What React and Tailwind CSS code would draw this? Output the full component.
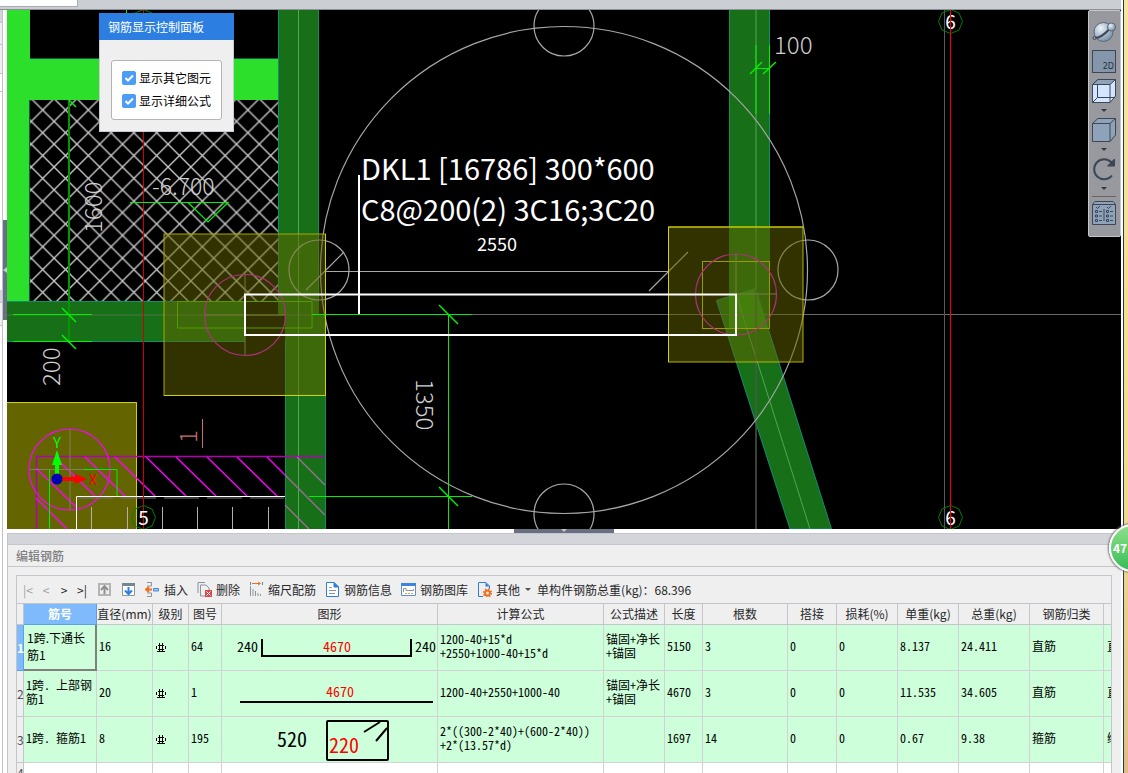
import { useState } from 'react';

const UI_FONT = 'font-["Noto_Sans_CJK_SC",sans-serif]';
const MONO_FONT = 'font-["Noto_Sans_Mono_CJK_SC","DejaVu_Sans_Mono","Noto_Sans_CJK_SC",monospace]';

/* ---------- model view ---------- */

/** Axis number inside a green octagon */
function AxisMark({ x, y, label }) {
  const points = '12,0 8.5,8.5 0,12 -8.5,8.5 -12,0 -8.5,-8.5 0,-12 8.5,-8.5';
  return (
    <g transform={`translate(${x} ${y})`}>
      <polygon points={points} fill="none" stroke="#008000" />
      {label && (
        <text y="7" textAnchor="middle" fontSize="19" fill="#fff">{label}</text>
      )}
    </g>
  );
}

/** Dimension text drawn with the thin CAD face */
function DimText({ x, y, rotate = 0, size = 24, color = '#d0d0d0', children }) {
  return (
    <text
      transform={`translate(${x} ${y}) rotate(${rotate})`}
      fontSize={size}
      fill={color}
      className='font-["Liberation_Sans_Narrow","Noto_Sans_CJK_SC",sans-serif] font-light'
    >
      {children}
    </text>
  );
}

function ModelDrawing() {
  return (
    <svg
      viewBox="7 10 1114 519"
      preserveAspectRatio="xMinYMin slice"
      className='block h-full w-full font-["Noto_Sans_CJK_SC",sans-serif]'
      fill="none"
    >
      <defs>
        <pattern id="hatch" x="31.3" y="98.6" width="22.8" height="22.8" patternUnits="userSpaceOnUse">
          <path d="M-1 -1L23.8 23.8M23.8 -1L-1 23.8" stroke="#c8c8c8" strokeWidth="1.4" />
        </pattern>
      </defs>
      <rect x="7" y="10" width="1114" height="519" fill="#000" />

      {/* walls and slab opening */}
      <rect x="30" y="100" width="248" height="201" fill="url(#hatch)" />
      <rect x="7" y="10" width="23" height="291" fill="#2bdf2b" />
      <rect x="30" y="59" width="248" height="41" fill="#2bdf2b" />
      <path d="M30 58.5H278M29.5 100V301" stroke="#0b5a50" />

      {/* beams */}
      <rect x="7" y="301" width="238" height="41" fill="#176f17" />
      <rect x="278" y="10" width="41" height="305" fill="#176f17" />
      <rect x="285" y="315" width="41" height="214" fill="#176f17" />
      <rect x="729" y="10" width="41" height="318" fill="#176f17" />
      <polygon points="716.5,300.5 755.5,288.5 831.5,529 790,529" fill="#176f17" stroke="#0f8f78" />
      <polygon points="729,296.5 755.5,288.5 768,328 729,328" fill="#259a18" />
      <path d="M7 301.5H245M7 341.5H245M278.5 10V301M318.5 10V301M285.5 341V529M325.5 396V529M729.5 10V227M769.5 10V227" stroke="#0f8f6c" />
      <path d="M298.5 10V529M756 10V289M736 294L810 529" stroke="#55a555" />
      <path d="M7 315H312" stroke="#4c7a4c" />
      <path d="M472 314.5H1121" stroke="#6a6a6a" />
      <path d="M756 289V529" stroke="#4a5a4a" strokeWidth="1.5" />

      {/* lower left footing */}
      <rect x="7" y="402" width="130" height="127" fill="#646400" />
      <path d="M7 402.5H136.5V529" stroke="#d2d200" />
      <path d="M36.5 529V456.5H325" stroke="#b400b4" strokeWidth="1.5" />
      <path d="M55 457l40 39M85 457l40 39M115 457l40 39M146 457l40 39M176 457l40 39M207 457l40 39M237 457l40 39M267 457l18 18M36 468l41 40M36 498l31 31" stroke="#ff00ff" strokeWidth="1.4" />
      <path d="M297 457l28 28M285 475l40 40M285 505l24 24" stroke="#987098" strokeWidth="1.4" />
      <circle cx="69.5" cy="469.5" r="40.5" stroke="#ff00ff" strokeWidth="1.2" />
      <path d="M70 429V510M30 469.5H110" stroke="#808060" />
      <path d="M49.5 529V469.5M84 469.5H117V496" stroke="#00f000" />
      <path d="M76.5 529V496.5H285" stroke="#fff" />
      <path d="M78 498H284" stroke="#777" strokeDasharray="35 8" />
      <path d="M91.5 507V529M127.5 507V529M162.5 507V529M197.5 507V529M232.5 507V529M268.5 507V529" stroke="#b0b0b0" />

      {/* circular column layout */}
      <g stroke="#a8a8a8" strokeWidth="1.2">
        <circle cx="564" cy="270" r="243.5" />
        <circle cx="564" cy="26" r="30" />
        <circle cx="564" cy="514" r="30" />
        <circle cx="319" cy="270" r="30" />
        <circle cx="808" cy="270" r="30" />
        <path d="M326 271.5H668M306 290L344 252M649 291L688 252" />
      </g>

      {/* column caps */}
      <g>
        <path d="M177.5 301.5V328H312V301.5Z" stroke="#48d000" />
        <path d="M245 274V355M205 315H285" stroke="#8a8a60" />
        <rect x="164" y="234" width="161.5" height="161.5" fill="#646400" fillOpacity=".5" stroke="#aaaa00" />
        <path d="M164 395.5H325.5V234" stroke="#d2d200" />
        <circle cx="245" cy="315" r="40.5" stroke="#b03080" strokeWidth="1.2" />
      </g>
      <g>
        <rect x="702.5" y="261.5" width="67" height="67" stroke="#d0d000" />
        <rect x="668.5" y="227" width="134.5" height="135" fill="#646400" fillOpacity=".5" stroke="#b4b400" />
        <path d="M668.5 362V227H803" stroke="#d2d200" />
        <circle cx="736" cy="294.5" r="40.5" stroke="#b03080" strokeWidth="1.2" />
        <path d="M736 254V294H776" stroke="#7a7a40" />
      </g>

      {/* axes */}
      <rect x="143" y="10" width="1" height="519" fill="#d00000" />
      <path d="M944.5 10V529" stroke="#5a5a5a" />
      <AxisMark x={143.5} y={21.5} />
      <AxisMark x={143.5} y={517.5} label="5" />
      <AxisMark x={950.5} y={21.5} label="6" />
      <AxisMark x={950.5} y={517.5} label="6" />
      <path d="M950.5 10V529" stroke="#f00" />

      {/* dimensions */}
      <g stroke="#00f000">
        <path d="M69 100V343" stroke="#009a00" strokeWidth="2" />
        <path d="M69 100l7 7M62 308l14 14M62 335l14 14M439 305l19 19M439 487l19 19M750 74l12 -12M763 74l13 -12" strokeWidth="1.5" />
        <path d="M13 314.5H92M13 341.5H92M126.5 10V14" />
        <path d="M130 202.5H228L208 222L188 202.5" strokeWidth="1.2" />
        <path d="M312 314.5H472M309 496.5H472M448.5 315V529" />
        <path d="M756 45V114M769.5 45V114M756 68.5H770" />
      </g>
      <DimText x={152} y={195} size={23}>-6.700</DimText>
      <DimText x={102} y={233} rotate={-90}>1600</DimText>
      <DimText x={60} y={386} rotate={-90}>200</DimText>
      <DimText x={416} y={379} rotate={90}>1350</DimText>
      <DimText x={774} y={54}>100</DimText>
      <path d="M202.5 419V448" stroke="#c87070" />
      <DimText x={197} y={443} rotate={-90} color="#c87070">1</DimText>

      {/* selected beam and its label */}
      <path d="M245 294.5H736V335H245Z" stroke="#fff" strokeWidth="2" />
      <path d="M359 175V314" stroke="#fff" strokeWidth="2" />
      <text x="361" y="180" fontSize="29" fill="#fff">DKL1 [16786] 300*600</text>
      <text x="361" y="221" fontSize="29" fill="#fff">C8@200(2) 3C16;3C20</text>
      <text x="477" y="251" fontSize="18" fill="#fff">2550</text>

      {/* UCS icon */}
      <path d="M57 479V464" stroke="#0f0" strokeWidth="4" />
      <polygon points="52,465 57,450 62,465" fill="#0f0" />
      <path d="M57 479H76" stroke="#f00" strokeWidth="4" />
      <polygon points="75,474 87,479 75,484" fill="#f00" />
      <circle cx="57" cy="479" r="5.5" fill="#0000b4" />
      <text x="57" y="448" fontSize="15" textAnchor="middle" fill="#0f0">Y</text>
      <text x="93" y="485" fontSize="15" textAnchor="middle" fill="#f00">X</text>
    </svg>
  );
}

/* ---------- floating panels over the model ---------- */

function CheckRow({ id, label }) {
  const [on, setOn] = useState(true);
  return (
    <label htmlFor={id} className="flex items-center gap-[3px] text-xs leading-[23px] text-black">
      <span className="grid h-3.5 w-3.5 place-items-center">
        <input
          id={id}
          type="checkbox"
          checked={on}
          onChange={(e) => setOn(e.target.checked)}
          className="col-start-1 row-start-1 h-3.5 w-3.5 appearance-none rounded-xs border border-[#4c9df5] bg-white checked:bg-[#4c9df5]"
        />
        {on && (
          <svg viewBox="0 0 14 14" className="pointer-events-none col-start-1 row-start-1 h-3.5 w-3.5">
            <path d="M3.5 7l2.5 2.5 5-5" fill="none" stroke="#fff" strokeWidth="2" />
          </svg>
        )}
      </span>
      {label}
    </label>
  );
}

function DisplayPanel() {
  return (
    <section className="absolute top-[3px] left-[92px] w-[135px] border border-[#c8ccd2] bg-[#efeff0]">
      <h2 className="-mx-px -mt-px bg-[#2c7fe1] px-[9px] text-xs leading-[27px] text-white">钢筋显示控制面板</h2>
      <div className="mx-[11px] mt-5 mb-[11px] rounded-[3px] border border-[#b4b4b4] bg-white pt-[5px] pb-[7px] pl-[10px]">
        <CheckRow id="show-others" label="显示其它图元" />
        <CheckRow id="show-formula" label="显示详细公式" />
      </div>
    </section>
  );
}

function Caret({ className = '' }) {
  return (
    <svg viewBox="0 0 6 3" className={`h-[3px] w-1.5 ${className}`}>
      <path d="M0 0h6L3 3z" fill="currentColor" />
    </svg>
  );
}

function ViewButton({ label, children }) {
  return (
    <button type="button" aria-label={label} className="block h-6 w-6">
      <svg viewBox="0 0 24 24" fill="none" stroke="#3c4654" className="h-6 w-6">{children}</svg>
    </button>
  );
}

function ViewToolbar() {
  return (
    <div className="absolute top-0 right-0 flex h-[227px] w-[33px] flex-col items-center rounded-[2px] border border-[#c4c6ca] bg-[#97999e] pt-2 pr-px text-[#323c48]">
      <ViewButton label="动态观察">
        <defs>
          <radialGradient id="ball" cx=".35" cy=".3" r=".8">
            <stop offset="0" stopColor="#eef4fa" />
            <stop offset="1" stopColor="#6f86a0" />
          </radialGradient>
        </defs>
        <circle cx="11.5" cy="13" r="9.5" fill="url(#ball)" stroke="#56677a" />
        <path d="M1.500 19C6 19.500 12 16 17 10.500" strokeWidth="2" />
        <circle cx="19.5" cy="8" r="4" fill="url(#ball)" stroke="#56677a" />
        <circle cx="2.5" cy="19" r="1.500" fill="#9aa" />
      </ViewButton>
      <button
        type="button"
        className="mt-[7px] flex h-[23px] w-6 items-end justify-end border border-[#3c4654] bg-[#8496ac] pr-[1px] font-['DejaVu_Sans'] text-[8px] leading-[10px] text-[#27313d]"
      >
        2D
      </button>
      <div className="mt-1.5">
        <ViewButton label="线框">
          <path d="M.5 5.5L6 .5H23.5V17L18 23.5H.5Z" fill="#d2e6ff" />
          <path d="M.5 5.5L6 .5H23.5L18 5.5Z" fill="#8ea2ba" />
          <path d="M18 5.5V23.5M.5 5.5H18M5.5 5.5V18.500H23M.5 23.5l5-5" />
        </ViewButton>
      </div>
      <Caret className="mt-[6px]" />
      <div className="mt-[6px]">
        <ViewButton label="实体">
          <path d="M.5 5.500L6 .5H23.5V17L18 23.5H.5Z" fill="#8ea2ba" />
          <path d="M.5 5.500H18V23.5M18 5.500L23.5 .5" />
        </ViewButton>
      </div>
      <Caret className="mt-[6px]" />
      <div className="mt-[6px]">
        <ViewButton label="旋转">
          <path d="M20 18.500a10 10 0 1 1 -.5 -13" strokeWidth="2" />
          <path d="M22.500 2V9H15.500Z" fill="#3c4654" />
        </ViewButton>
      </div>
      <Caret className="mt-[6px]" />
      <hr className="mt-[6px] w-6 border-[#6c6464]" />
      <div className="mt-1">
        <ViewButton label="显示设置">
          <path d="M.5 3.500L3 .5H21L23.5 3.500V23.5H.5Z" fill="#8ea2ba" />
          <path d="M.5 3.500H23.5M12 8V20M4 6l1.500 1.500L8 5M15 6l1.500 1.500L19 5" />
          <path d="M3.500 9.500h2v2h-2zM3.500 14h2v2h-2zM3.500 18.500h2v2h-2zM14.500 9.500h2v2h-2zM14.500 14h2v2h-2zM14.500 18.500h2v2h-2zM7 10.500h3M7 15h3M7 19.500h3M18 10.500h3M18 15h3M18 19.500h3" />
        </ViewButton>
      </div>
    </div>
  );
}

/* ---------- rebar editor ---------- */

const ICONS = {
  up: (
    <>
      <path d="M1 1H14V14H1Z" fill="#b4b4b4" />
      <path d="M3 3H12V12H3Z" fill="#efeff0" />
      <path d="M7.500 12V4M4 8l3.500-4L11 8" stroke="#909090" strokeWidth="2" />
    </>
  ),
  down: (
    <>
      <path d="M1.500 1.500H13.500V13.500H1.500Z" fill="#fff" stroke="#8896a0" />
      <path d="M1 1H14V4H1Z" fill="#78868e" />
      <path d="M7.500 5V12M4 8.500l3.500 3.500L11 8.500" stroke="#2c7fe1" strokeWidth="2" />
    </>
  ),
  insert: (
    <>
      <path d="M2 .5H6.500V4H2M2 14.500H6.500V11H2" stroke="#8a949c" />
      <path d="M1 7.500H7M4 5L1 7.500L4 10" stroke="#f07020" strokeWidth="2" />
      <path d="M8.500 6.500H13.500V9H8.500Z" fill="#a8c8f0" stroke="#4488d8" />
    </>
  ),
  remove: (
    <>
      <path d="M1 11V.5H8M3.500 14V3H9L12 6V14Z" stroke="#8a949c" />
      <path d="M8 8H15V15H8Z" fill="#d84848" />
      <path d="M9.500 9.500l4 4M13.500 9.500l-4 4" stroke="#fff" />
    </>
  ),
  scale: (
    <>
      <path d="M1.500 4V14M4 7V14M6.500 9V14M9 11V14M11.500 12V14" stroke="#8a949c" />
      <path d="M1.500 0V3M13.500 0V3" stroke="#4488d8" />
      <path d="M3 1.500H11M9 0l2.500 1.500L9 3" stroke="#f07020" />
    </>
  ),
  info: (
    <>
      <path d="M1.500 .5H9L13.500 5V14.500H1.500Z" fill="#fff" stroke="#2c7fe1" />
      <path d="M9 .5V5H13.500Z" fill="#2c7fe1" stroke="#2c7fe1" />
      <path d="M4 5.500H7M4 8.500H11M4 11.500H10" stroke="#8a949c" />
    </>
  ),
  library: (
    <>
      <path d="M.5 1.500H14.500V13.500H.5Z" fill="#fff" stroke="#6090c8" />
      <path d="M0 1H15V4H0Z" fill="#3c84dc" />
      <path d="M2.500 10V6.500H5V8.500H12.500V7" stroke="#8a949c" />
      <path d="M4 11.500H12" stroke="#d8a060" strokeDasharray="2 1" />
    </>
  ),
  other: (
    <>
      <path d="M6 14.500H1.500V.5H9L12.500 4V7" stroke="#2c7fe1" />
      <path d="M8.500 .5V4.500H12.500Z" fill="#2c7fe1" />
      <circle cx="10.500" cy="11" r="2.500" stroke="#f07020" strokeWidth="2" />
      <circle cx="10.500" cy="11" r="4" stroke="#f07020" strokeWidth="1.500" strokeDasharray="1.500 1.640" />
    </>
  ),
};

function ToolButton({ icon, label, hideLabel, caret }) {
  return (
    <button type="button" aria-label={label} className="flex items-center gap-1 whitespace-nowrap">
      <svg viewBox="0 0 15 15" fill="none" className="h-[15px] w-[15px]">{ICONS[icon]}</svg>
      {!hideLabel && <span>{label}</span>}
      {caret && <Caret className="ml-px text-[#505050]" />}
    </button>
  );
}

function NavButton({ label, glyph, disabled }) {
  return (
    <button type="button" aria-label={label} disabled={disabled} className="w-[18px] text-center disabled:text-[#a0a0a0]">
      {glyph}
    </button>
  );
}

function EditorToolbar() {
  return (
    <div className="flex h-7 items-center gap-[9px] border-b border-[#c4c6cc] pl-0.5 text-xs text-[#282828]">
      <div className="-mr-[3px] flex shrink-0">
        <NavButton label="首条" glyph="|<" disabled />
        <NavButton label="上一条" glyph="<" disabled />
        <NavButton label="下一条" glyph=">" />
        <NavButton label="末条" glyph=">|" />
      </div>
      <ToolButton icon="up" label="上移" hideLabel />
      <ToolButton icon="down" label="下移" hideLabel />
      <ToolButton icon="insert" label="插入" />
      <ToolButton icon="remove" label="删除" />
      <ToolButton icon="scale" label="缩尺配筋" />
      <ToolButton icon="info" label="钢筋信息" />
      <ToolButton icon="library" label="钢筋图库" />
      <ToolButton icon="other" label="其他" caret />
      <p className="-ml-[3px] whitespace-nowrap">单构件钢筋总重(kg)：68.396</p>
    </div>
  );
}

function BarShape({ kind }) {
  return (
    <svg viewBox="0 0 215 45" className={`block h-[45px] w-[215px] ${MONO_FONT}`} fill="none" stroke="#000" strokeWidth="2">
      {kind === 'u' && (
        <>
          <path d="M40 14V31H189V14" />
          <g stroke="none" fontSize="14">
            <text x="15" y="27" fill="#000">240</text>
            <text x="101" y="27" fill="#f00">4670</text>
            <text x="193" y="27" fill="#000">240</text>
          </g>
        </>
      )}
      {kind === 'line' && (
        <>
          <path d="M18 31H211" />
          <text x="104" y="26" fontSize="14" fill="#f00" stroke="none">4670</text>
        </>
      )}
      {kind === 'stirrup' && (
        <>
          <rect x="105" y="4" width="61" height="39" rx="1" />
          <path d="M142 15L158 5M154 24L165 11" />
          <g stroke="none" fontSize="20">
            <text x="55" y="30" fill="#000">520</text>
            <text x="107" y="36" fill="#f00">220</text>
          </g>
        </>
      )}
    </svg>
  );
}

function GradeSymbol() {
  return (
    <svg viewBox="0 0 10 10" className="ml-[3px] block h-2.5 w-2.5" fill="none" stroke="#000">
      <path d="M2 2.500H8M.5 3V6M9.500 3V6M2 6.500H8M3.500 0V9M6.500 0V9M1 8.500H9" />
    </svg>
  );
}

const HEADERS = ['筋号', '直径(mm)', '级别', '图号', '图形', '计算公式', '公式描述', '长度', '根数', '搭接', '损耗(%)', '单重(kg)', '总重(kg)', '钢筋归类'];

const COLS = [
  'w-[7px]', 'w-[73px]', 'w-[56px]', 'w-[36px]', 'w-[33px]', 'w-[216px]', 'w-[166px]', 'w-[61px]',
  'w-[38px]', 'w-[85px]', 'w-[49px]', 'w-[61px]', 'w-[61px]', 'w-[71px]', 'w-[74px]',
];

const ROWS = [
  {
    name: ['1跨.下通长', '筋1'], dia: 16, fig: 64, shape: 'u',
    formula: ['1200-40+15*d', '+2550+1000-40+15*d'], desc: ['锚固+净长', '+锚固'],
    len: 5150, count: 3, unit: '8.137', total: '24.411', cls: '直筋', next: '直',
  },
  {
    name: ['1跨. 上部钢', '筋1'], dia: 20, fig: 1, shape: 'line',
    formula: ['1200-40+2550+1000-40'], desc: ['锚固+净长', '+锚固'],
    len: 4670, count: 3, unit: '11.535', total: '34.605', cls: '直筋', next: '直',
  },
  {
    name: ['1跨. 箍筋1'], dia: 8, fig: 195, shape: 'stirrup',
    formula: ['2*((300-2*40)+(600-2*40))', '+2*(13.57*d)'], desc: [],
    len: 1697, count: 14, unit: '0.67', total: '9.38', cls: '箍筋', next: '绑',
  },
];

const CELL = 'h-[46px] overflow-hidden border-r border-b border-[#d2d2d6] p-0 pb-1 pl-[2px] whitespace-nowrap';

function Lines({ items }) {
  return items.map((t) => <div key={t}>{t}</div>);
}

function RebarTable() {
  const [selected, setSelected] = useState(0);
  return (
    <table className="w-full table-fixed border-separate border-spacing-0 text-xs leading-[14px] text-black">
      <colgroup>
        {COLS.map((w, i) => <col key={i} className={w} />)}
        <col />
      </colgroup>
      <thead>
        <tr className="bg-[#efeff0] text-[#282828]">
          <th className="h-[21px] border-r border-b border-[#c4c6cc] p-0" />
          {HEADERS.map((h, i) => (
            <th
              key={h}
              className={
                i === 0
                  ? 'border-r border-b border-[#5ca0ea] bg-[#7ebafc] p-0 font-bold text-white'
                  : 'border-r border-b border-[#c4c6cc] p-0 font-normal whitespace-nowrap'
              }
            >
              {h}
            </th>
          ))}
          <th className="border-b border-[#c4c6cc] p-0" />
        </tr>
      </thead>
      <tbody className={MONO_FONT}>
        {ROWS.map((r, i) => {
          const on = selected === i;
          return (
            <tr key={r.fig} onClick={() => setSelected(i)} className="bg-[#ccffda]">
              <th
                className={`border-r border-b p-0 font-["Noto_Sans_CJK_SC",sans-serif] ${
                  on ? 'border-[#5ca0ea] bg-[#7ebafc] font-bold text-white' : 'border-[#c4c6cc] bg-[#efeff0] font-normal text-[#505050]'
                }`}
              >
                {i + 1}
              </th>
              <td
                className={
                  on
                    ? 'h-[46px] border-r-2 border-b-2 border-[#808080] p-0 pb-[2px] pl-[3px] font-["Noto_Sans_CJK_SC",sans-serif] leading-[17px] whitespace-nowrap'
                    : CELL
                }
              >
                <Lines items={r.name} />
              </td>
              <td className={CELL}>{r.dia}</td>
              <td className="border-r border-b border-[#d2d2d6] p-0"><GradeSymbol /></td>
              <td className={CELL}>{r.fig}</td>
              <td className="border-r border-b border-[#d2d2d6] p-0"><BarShape kind={r.shape} /></td>
              <td className={CELL}><Lines items={r.formula} /></td>
              <td className={CELL}><Lines items={r.desc} /></td>
              <td className={CELL}>{r.len}</td>
              <td className={CELL}>{r.count}</td>
              <td className={CELL}>0</td>
              <td className={CELL}>0</td>
              <td className={CELL}>{r.unit}</td>
              <td className={CELL}>{r.total}</td>
              <td className={CELL}>{r.cls}</td>
              <td className="overflow-hidden border-b border-[#d2d2d6] p-0 pb-1 pl-[3px] whitespace-nowrap">{r.next}</td>
            </tr>
          );
        })}
        <tr className="bg-white">
          <th className='h-[46px] border-r border-[#c4c6cc] bg-[#efeff0] p-0 pt-[3px] align-top font-["Noto_Sans_CJK_SC",sans-serif] font-normal text-[#505050]'>4</th>
          {HEADERS.map((h) => <td key={h} className="border-r border-[#d2d2d6] p-0" />)}
          <td className="p-0" />
        </tr>
      </tbody>
    </table>
  );
}

function RebarEditor() {
  return (
    <section className="flex h-60 shrink-0 flex-col overflow-hidden border-t border-l border-[#c4c6cc] bg-[#efeff0]">
      <div className="h-2.5 shrink-0 bg-[#d3d5da]" />
      <h2 className="shrink-0 border-y border-[#c4c6cc] pl-2 text-xs leading-[21px] font-medium text-[#808080]">编辑钢筋</h2>
      <div className="mt-2 mr-[9px] ml-2 flex-1 overflow-hidden border border-b-0 border-[#c4c6cc]">
        <EditorToolbar />
        <RebarTable />
      </div>
    </section>
  );
}

/* ---------- window frame ---------- */

function LeftStrip() {
  return (
    <div className="flex w-[7px] shrink-0 bg-white">
      <div className="flex w-[3px] flex-col border-r border-[#c0c2c8] bg-white">
        <div className="h-3 bg-[#d3d5da]" />
        <div className="h-[23px] border-y border-[#c0c2c8] bg-[#efeff0]" />
        <div className="h-7 bg-[#efeff0]" />
        <div className="h-[19px] border-y border-[#c0c2c8]" />
        <div className="h-[198px]" />
        <div className="h-3 bg-[#d3d5da]" />
        <div className="h-6 border-y border-[#c0c2c8] bg-[#efeff0]" />
      </div>
      <button type="button" aria-label="收起左侧" className="mt-[210px] flex h-[100px] w-1 items-center bg-[#667080]">
        <svg viewBox="0 0 4 6" className="h-1.5 w-1"><path d="M4 0V6L0 3z" fill="#c4c8ce" /></svg>
      </button>
    </div>
  );
}

export default function App() {
  return (
    <div className={`relative flex h-screen w-full overflow-hidden bg-white ${UI_FONT}`}>
      <div className="flex min-w-0 flex-1 flex-col">
        <div className="flex h-2.5 shrink-0 border-b border-[#8c9096] bg-[#cbced3]">
          <div className="h-[7px] w-[78px] border-r border-b border-[#a8abb0] bg-white" />
        </div>
        <div className="flex min-h-0 flex-1">
          <LeftStrip />
          <main className="flex min-w-0 flex-1 flex-col">
            <div className="relative min-h-0 flex-1 overflow-hidden bg-black">
              <ModelDrawing />
              <DisplayPanel />
              <ViewToolbar />
            </div>
            <div className="flex h-1 shrink-0 justify-center">
              <button type="button" aria-label="收起面板" className="flex w-[100px] justify-center bg-[#667080]">
                <svg viewBox="0 0 6 3" className="h-[3px] w-1.5"><path d="M0 0h6L3 3z" fill="#c4c8ce" /></svg>
              </button>
            </div>
            <RebarEditor />
          </main>
        </div>
      </div>

      {/* window edge and the desktop behind it */}
      <div className="w-[7px] shrink-0 border-l-2 border-white">
        <div className="h-full border-l border-[#1c3a5c] bg-linear-to-b from-[#fbe49a] via-[#f3d98c] via-65% to-[#e2bd84]" />
      </div>
      <button
        type="button"
        className="absolute top-[524px] -right-[29px] h-12 w-12 rounded-full border-2 border-white bg-linear-to-b from-[#8be08b] to-[#30bd55] pl-[2px] text-left text-xs leading-none font-bold text-white shadow-[0_0_2px_1px_#707070]"
      >
        47
      </button>
    </div>
  );
}
